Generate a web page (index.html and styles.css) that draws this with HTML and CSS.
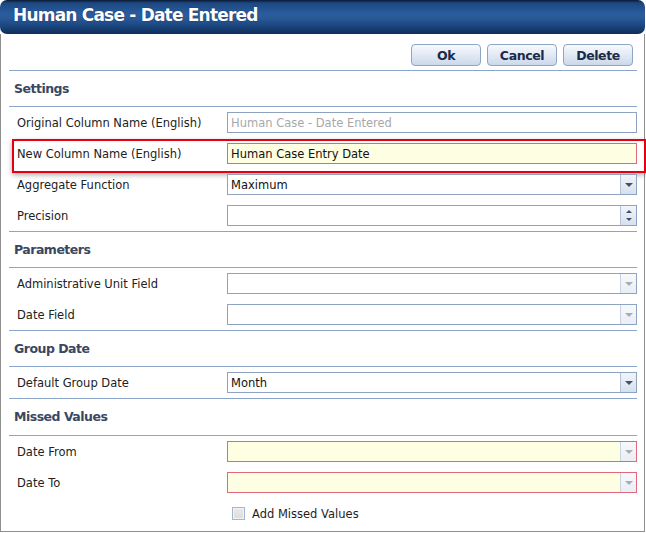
FILE: index.html
```html
<!DOCTYPE html>
<html>
<head>
<meta charset="utf-8">
<link rel="stylesheet" href="styles.css">
</head>
<body>
<div class="window">
  <div class="titlebar">Human Case - Date Entered</div>
  <div class="body">
    <div class="toolbar">
      <button class="btn">Ok</button>
      <button class="btn">Cancel</button>
      <button class="btn">Delete</button>
    </div>

    <div class="section">Settings</div>
    <div class="rows">
      <div class="row">
        <span class="label">Original Column Name (English)</span>
        <div class="field"><span class="value placeholder">Human Case - Date Entered</span></div>
      </div>
      <div class="row highlighted">
        <span class="label">New Column Name (English)</span>
        <div class="field required"><span class="value">Human Case Entry Date</span></div>
      </div>
      <div class="row">
        <span class="label">Aggregate Function</span>
        <div class="field"><span class="value">Maximum</span><span class="drop"><span class="arrow-down"></span></span></div>
      </div>
      <div class="row">
        <span class="label">Precision</span>
        <div class="field"><span class="value"></span><span class="drop spin"><span class="arrow-up"></span><span class="arrow-down"></span></span></div>
      </div>
    </div>

    <div class="section">Parameters</div>
    <div class="rows">
      <div class="row">
        <span class="label">Administrative Unit Field</span>
        <div class="field"><span class="value"></span><span class="drop disabled"><span class="arrow-down"></span></span></div>
      </div>
      <div class="row">
        <span class="label">Date Field</span>
        <div class="field"><span class="value"></span><span class="drop disabled"><span class="arrow-down"></span></span></div>
      </div>
    </div>

    <div class="section">Group Date</div>
    <div class="rows">
      <div class="row">
        <span class="label">Default Group Date</span>
        <div class="field"><span class="value">Month</span><span class="drop"><span class="arrow-down"></span></span></div>
      </div>
    </div>

    <div class="section tall">Missed Values</div>
    <div class="rows last">
      <div class="row">
        <span class="label">Date From</span>
        <div class="field required"><span class="value"></span><span class="drop disabled"><span class="arrow-down"></span></span></div>
      </div>
      <div class="row">
        <span class="label">Date To</span>
        <div class="field required"><span class="value"></span><span class="drop disabled"><span class="arrow-down"></span></span></div>
      </div>
      <div class="row check-row">
        <span class="checkbox"></span><span class="check-label">Add Missed Values</span>
      </div>
    </div>
  </div>
</div>
</body>
</html>
```

FILE: styles.css
```css
* { box-sizing: border-box; }
html, body { margin: 0; padding: 0; background: #fff; }
body {
  font-family: "DejaVu Sans", Verdana, sans-serif;
  font-size: 11.5px;
  color: #1e1e1e;
}
.window { width: 645px; }
.titlebar {
  height: 34px;
  border-radius: 7px;
  background: linear-gradient(#0b1a33 0px, #1c4881 3px, #2a5c9d 14px, #2a5a99 18px, #1b467f 26px, #10305c 33px);
  color: #fff;
  font-weight: bold;
  font-size: 17px;
  letter-spacing: -0.8px;
  line-height: 31px;
  padding-left: 13px;
  text-shadow: 0 0 1px #0a1f3f;
}
.body {
  border: 1px solid #8e8e8e;
  border-top: 0;
  padding: 0 7px 2px 8px;
}
.toolbar {
  height: 37px;
  border-bottom: 1px solid #8aa5c9;
  display: flex;
  justify-content: flex-end;
  align-items: flex-start;
  gap: 6px;
  padding: 10px 4px 0 0;
}
.btn {
  width: 70px;
  height: 22px;
  border: 1px solid #8fa5c4;
  border-radius: 4px;
  background: linear-gradient(#f7f9fc, #e4ebf5 45%, #ccd8ea);
  font-family: "DejaVu Sans", Verdana, sans-serif;
  font-weight: bold;
  font-size: 12.5px;
  letter-spacing: -0.4px;
  color: #1b2a4a;
  padding: 0;
}
.section {
  height: 36px;
  border-bottom: 1px solid #8aa5c9;
  padding-left: 5px;
  line-height: 35px;
  font-weight: bold;
  font-size: 12.5px;
  letter-spacing: -0.5px;
  color: #3a4760;
}
.section.tall { height: 37px; line-height: 36px; }
.rows {
  border-bottom: 1px solid #8aa5c9;
}
.rows.last { border-bottom: 0; }
.row {
  height: 31px;
  display: flex;
  align-items: center;
  position: relative;
}
.label {
  width: 218px;
  padding-left: 8px;
  color: #222;
}
.field {
  width: 410px;
  height: 21px;
  border: 1px solid #8ea3c1;
  background: #fff;
  display: flex;
  align-items: stretch;
}
.field .value {
  flex: 1;
  padding-left: 3px;
  line-height: 20px;
  color: #111;
}
.field .placeholder { color: #a8a8a8; }
.field.required {
  border-color: #e0687a;
  background: #fefee3;
}
.drop {
  width: 16px;
  border-left: 1px solid #b3c2d7;
  background: linear-gradient(#f1f5fa, #d6e0ee);
  display: flex;
  align-items: center;
  justify-content: center;
}
.drop.disabled {
  background: linear-gradient(#f7f9fb, #e9eef5);
  border-left-color: #c9d3e0;
}
.arrow-down {
  width: 0; height: 0;
  border-left: 4px solid transparent;
  border-right: 4px solid transparent;
  border-top: 4px solid #445066;
}
.arrow-up {
  width: 0; height: 0;
  border-left: 3px solid transparent;
  border-right: 3px solid transparent;
  border-bottom: 3px solid #445066;
}
.drop.disabled .arrow-down { border-top-color: #a9adb3; }
.drop.spin { flex-direction: column; gap: 5px; }
.drop.spin .arrow-down {
  border-left-width: 3px;
  border-right-width: 3px;
  border-top-width: 3px;
}
.highlighted::after {
  content: "";
  position: absolute;
  left: 3px;
  top: 1px;
  width: 630px;
  height: 30px;
  border: 2px solid #e4000f;
  box-shadow: 0 2px 5px rgba(0,0,0,0.32);
  pointer-events: none;
}
.check-row { padding-left: 223px; }
.checkbox {
  width: 13px;
  height: 13px;
  border: 1px solid #a5b5cc;
  background: linear-gradient(#e9e9e9, #dcdcdc);
  box-shadow: inset 0 0 0 1px #f4f4f4;
  margin-right: 7px;
}
.check-label { color: #1e1e1e; }
```
